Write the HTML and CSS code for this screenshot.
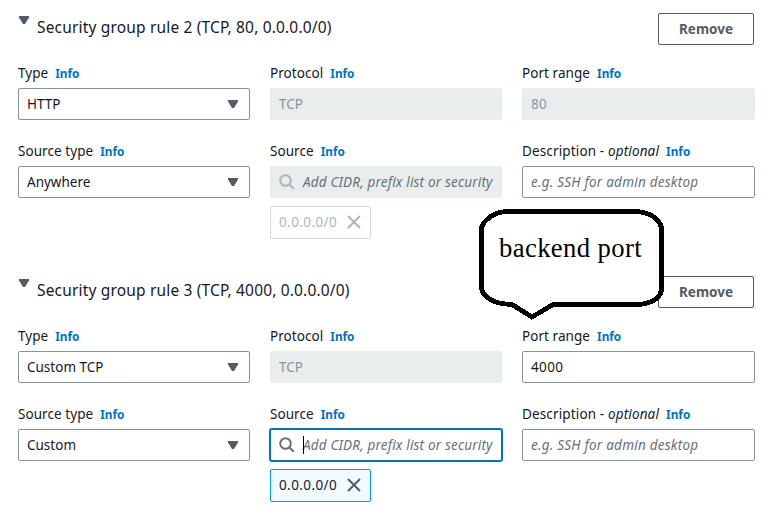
FILE: index.html
```html
<!DOCTYPE html>
<html lang="en">
<head>
<meta charset="utf-8">
<title>Security group rules</title>
<link rel="stylesheet" href="styles.css">
</head>
<body>
<svg class="defs" width="0" height="0" aria-hidden="true">
  <symbol id="caret" viewBox="0 0 10 8"><path d="M0 0h10v1.500L6 8H4L0 1.500z" fill="currentColor"/></symbol>
  <symbol id="search" viewBox="0 0 16 16"><g fill="none" stroke="currentColor" stroke-width="2"><circle cx="6.500" cy="6.500" r="5.300"/><path d="M10.500 10.500l4.300 4.300"/></g></symbol>
  <symbol id="close" viewBox="0 0 14 14"><path d="M1 1l12 12M13 1L1 13" fill="none" stroke="currentColor" stroke-width="2"/></symbol>
</svg>
<main class="rules">
  <section class="rule">
    <header class="rule-header">
      <svg class="caret"><use href="#caret"/></svg>
      <h2 class="title">Security group rule 2 (TCP, 80, 0.0.0.0/0)</h2>
      <button class="remove">Remove</button>
    </header>
    <div class="fields">
      <div class="field"><div class="label"><span>Type</span><a class="info">Info</a></div>
        <div class="control"><span>HTTP</span><svg class="caret"><use href="#caret"/></svg></div></div>
      <div class="field"><div class="label"><span>Protocol</span><a class="info">Info</a></div>
        <div class="control disabled"><span>TCP</span></div></div>
      <div class="field"><div class="label"><span>Port range</span><a class="info">Info</a></div>
        <div class="control disabled"><span class="number">80</span></div></div>
      <div class="field"><div class="label"><span>Source type</span><a class="info">Info</a></div>
        <div class="control"><span>Anywhere</span><svg class="caret"><use href="#caret"/></svg></div></div>
      <div class="field"><div class="label"><span>Source</span><a class="info">Info</a></div>
        <div class="control disabled search"><svg class="glass"><use href="#search"/></svg><span class="placeholder">Add CIDR, prefix list or security</span></div>
        <div class="token token-off"><span class="number">0.0.0.0/0</span><svg class="close"><use href="#close"/></svg></div></div>
      <div class="field"><div class="label"><span class="description">Description - <i>optional</i></span><a class="info">Info</a></div>
        <div class="control"><span class="placeholder example">e.g. SSH for admin desktop</span></div></div>
    </div>
  </section>
  <section class="rule">
    <header class="rule-header">
      <svg class="caret"><use href="#caret"/></svg>
      <h2 class="title">Security group rule 3 (TCP, 4000, 0.0.0.0/0)</h2>
      <button class="remove">Remove</button>
    </header>
    <div class="fields">
      <div class="field"><div class="label"><span>Type</span><a class="info">Info</a></div>
        <div class="control"><span>Custom TCP</span><svg class="caret"><use href="#caret"/></svg></div></div>
      <div class="field"><div class="label"><span>Protocol</span><a class="info">Info</a></div>
        <div class="control disabled"><span>TCP</span></div></div>
      <div class="field"><div class="label"><span>Port range</span><a class="info">Info</a></div>
        <div class="control"><span class="number">4000</span></div></div>
      <div class="field"><div class="label"><span>Source type</span><a class="info">Info</a></div>
        <div class="control"><span>Custom</span><svg class="caret"><use href="#caret"/></svg></div></div>
      <div class="field"><div class="label"><span>Source</span><a class="info">Info</a></div>
        <div class="control search focused"><svg class="glass"><use href="#search"/></svg><span class="placeholder">Add CIDR, prefix list or security</span></div>
        <div class="token"><span class="number">0.0.0.0/0</span><svg class="close"><use href="#close"/></svg></div></div>
      <div class="field"><div class="label"><span class="description">Description - <i>optional</i></span><a class="info">Info</a></div>
        <div class="control"><span class="placeholder example">e.g. SSH for admin desktop</span></div></div>
    </div>
  </section>
</main>
<div class="callout">
  <svg class="bubble" viewBox="0 0 190 114"><path d="M28 5.500H160Q173 7 179 14Q183.500 18 183.500 24V82Q183.500 88 179 92Q172 98 160 98.500H75L54 111L34 98.500Q16 98 9 91Q3.500 87 3.500 80V24Q3.500 18 9 13.500Q16 6.500 28 5.500Z" fill="#fff" stroke="#000" stroke-width="4.800" shape-rendering="crispEdges"/></svg>
  <span class="callout-text">backend port</span>
</div>
</body>
</html>
```
FILE: styles.css
```css
* { box-sizing: border-box; }
body {
  margin: 0;
  width: 774px;
  height: 514px;
  overflow: hidden;
  position: relative;
  background: #fff;
  color: #16191f;
  font: 13.5px/18px "Noto Sans", sans-serif;
  white-space: nowrap;
}
.defs { position: absolute; }
.rules { padding: 13px 19px 0 18px; }
.rule { height: 263px; }
.rule-header { display: flex; align-items: flex-start; height: 51px; }
.caret { width: 10px; height: 8px; color: #545b64; flex: none; }
.rule-header .caret { margin: 3px 8px 0 1px; }
.title { margin: 3px 0 0; font-size: 15.5px; line-height: 22px; font-weight: 400; letter-spacing: 0.17px; }
.remove {
  width: 96px;
  height: 32px;
  margin: 0 1px 0 auto;
  padding: 0;
  border: 1px solid #545b64;
  border-radius: 2px;
  background: #fff;
  color: #545b64;
  font: 700 13.5px/18px "Noto Sans", sans-serif;
}
.fields { display: grid; grid-template-columns: 232px 232px 233px; column-gap: 20px; grid-auto-rows: 78px; }
.label { display: flex; align-items: center; height: 18px; margin-bottom: 6px; gap: 7px; letter-spacing: 0.06px; }
.description { letter-spacing: 0.14px; }
.info { color: #0073bb; font-size: 11.8px; font-weight: 700; letter-spacing: 0; }
.control {
  display: flex;
  align-items: center;
  justify-content: space-between;
  height: 32px;
  padding: 0 11px 0 8px;
  border: 1px solid #879596;
  border-radius: 2px;
  background: #fff;
}
.disabled { background: #eaeded; border-color: #eaeded; color: #879596; }
.number { letter-spacing: 0.4px; }
.placeholder { color: #687078; font-style: italic; letter-spacing: 0.18px; }
.example { letter-spacing: 0.24px; }
.search { justify-content: flex-start; gap: 8px; padding-right: 8px; }
.glass { width: 16px; height: 16px; color: #687078; flex: none; }
.disabled .glass { color: #aab7b8; }
.focused { position: relative; border-color: #0073bb; box-shadow: 0 0 0 1px #0073bb; }
.focused::after { content: ""; position: absolute; left: 32px; top: 6px; width: 1px; height: 18px; background: #000; }
.token {
  display: flex;
  align-items: center;
  justify-content: space-between;
  width: 101px;
  height: 33px;
  margin-top: 8px;
  padding: 0 9px 1px 8px;
  border: 1px solid #00a1c9;
  border-radius: 2px;
  background: #f1faff;
}
.close { width: 14px; height: 14px; color: #545b64; }
.token-off { border-color: #d5dbdb; background: #fff; color: #aab7b8; }
.token-off .close { color: #aab7b8; }
.callout { position: absolute; left: 478px; top: 206px; width: 190px; height: 114px; }
.bubble { display: block; width: 190px; height: 114px; }
.callout-text { position: absolute; left: 21px; top: 27px; color: #000; font: 26.67px/30px "Liberation Serif", serif; letter-spacing: 0.38px; }
```
